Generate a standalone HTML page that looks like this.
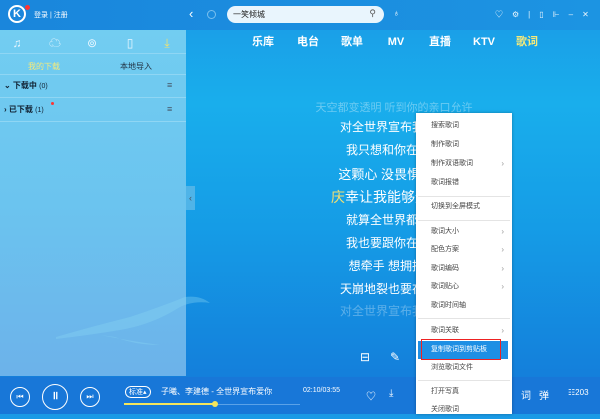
<!DOCTYPE html>
<html><head><meta charset="utf-8"><style>
*{margin:0;padding:0;box-sizing:border-box}
body{width:600px;height:414px;overflow:hidden;position:relative;font-family:"Liberation Sans","Noto Sans CJK SC",sans-serif;background:linear-gradient(180deg,#1a9ae6 0%,#19aeec 25%,#159ce6 55%,#1478d8 100%);color:#fff}
.abs{position:absolute}
.top{left:0;top:0;width:600px;height:30px;background:linear-gradient(90deg,#1a86dc,#1c94e2)}
.left{left:0;top:30px;width:186px;height:346px;background:linear-gradient(180deg,#72cdf1,#6bc4ef 50%,#6cb2ea);}
.nav span{position:absolute;top:34px;height:16px;line-height:16px;font-size:11px;font-weight:bold;transform:translateX(-50%)}
.ic{position:absolute;top:36px;font-size:12px;color:#e8f6ff;line-height:14px;transform:translateX(-50%)}
.lyr{position:absolute;font-size:12px;white-space:nowrap;transform:translateX(-50%)}
.menu{left:416px;top:113px;width:96px;height:301px;background:#fff;box-shadow:0 0 3px rgba(0,0,0,.3)}
.mi{position:absolute;left:0;width:96px;height:18px;font-size:7px;color:#444;padding-left:15px;line-height:18px}
.mi i{position:absolute;right:8px;font-style:normal;color:#999;font-size:8px}
.sep{position:absolute;left:2px;width:92px;height:1px;background:#e4e4e4}
.bar{left:0;top:377px;width:600px;height:37px;background:#1877d8}
.cb{position:absolute;border:1.5px solid #fff;border-radius:50%}
</style></head><body>
<div class="abs top"></div>
<div class="abs" style="left:8px;top:5px;width:18px;height:18px;border:2px solid #fff;border-radius:50%;font-size:11px;font-weight:bold;text-align:center;line-height:14px">K</div>
<div class="abs" style="left:25px;top:5px;width:5px;height:5px;background:#f33;border-radius:50%"></div>
<div class="abs" style="left:34px;top:10px;font-size:7px">登录 | 注册</div>
<div class="abs" style="left:189px;top:6px;font-size:13px">‹</div>
<div class="abs" style="left:207px;top:10px;width:9px;height:9px;border:1px solid #7bc0ee;border-radius:50%"></div>
<div class="abs" style="left:227px;top:6px;width:157px;height:17px;background:#e9f5fd;border-radius:9px;color:#222;font-size:8px;padding:3px 0 0 6px">一笑倾城<span style="position:absolute;right:8px;top:2px;color:#555;font-size:9px">⚲</span></div>
<div class="abs" style="left:393px;top:8px;font-size:9px">♁</div>
<div class="abs" style="left:495px;top:9px;font-size:8px;letter-spacing:9px;opacity:.9">♡⚙|▯⊩–✕</div>
<div class="abs left"></div>
<div class="abs" style="left:186px;top:186px;width:9px;height:24px;background:#4fb4e8;font-size:9px;color:#456;text-align:center;line-height:24px">‹</div>
<div class="ic" style="left:17px">♫</div>
<div class="ic" style="left:55px">☁</div>
<div class="ic" style="left:92px">⊚</div>
<div class="ic" style="left:130px">▯</div>
<div class="ic" style="left:167px;color:#f5e26a">⤓</div>
<div class="abs" style="left:0;top:53px;width:186px;height:1px;background:#8fd6f4"></div>
<div class="abs" style="left:28px;top:61px;font-size:8px;color:#f5ea7a">我的下载</div>
<div class="abs" style="left:120px;top:61px;font-size:8px;color:#234">本地导入</div>
<div class="abs" style="left:0;top:74px;width:186px;height:1px;background:#8fd6f4"></div>
<div class="abs" style="left:4px;top:80px;font-size:8px;color:#123"><b>⌄ 下载中</b> <span style="font-size:7px">(0)</span></div>
<div class="abs" style="left:167px;top:80px;font-size:9px;color:#456">≡</div>
<div class="abs" style="left:0;top:97px;width:186px;height:1px;background:#8fd6f4"></div>
<div class="abs" style="left:4px;top:104px;font-size:8px;color:#123"><b>› 已下载</b> <span style="font-size:7px">(1)</span></div>
<div class="abs" style="left:51px;top:102px;width:3px;height:3px;background:#f33;border-radius:50%"></div>
<div class="abs" style="left:167px;top:104px;font-size:9px;color:#456">≡</div>
<div class="abs" style="left:0;top:121px;width:186px;height:1px;background:#8fd6f4"></div>
<svg class="abs" style="left:50px;top:275px" width="170" height="80"><path d="M6 62 Q40 52 80 42 Q110 32 135 22 Q150 20 160 28 Q140 25 125 35 Q100 50 70 55 Q40 60 6 64Z" fill="#8ad6f4" opacity=".35"/><path d="M50 60 Q80 66 110 70 Q85 70 65 62Z" fill="#8ad6f4" opacity=".35"/></svg>
<div class="nav"><span style="left:263px">乐库</span><span style="left:308px">电台</span><span style="left:352px">歌单</span><span style="left:396px">MV</span><span style="left:440px">直播</span><span style="left:484px">KTV</span><span style="left:527px;color:#f5ea7a">歌词</span></div>
<div class="lyr" style="left:394px;top:99px;font-size:11px;opacity:.35">天空都变透明 听到你的亲口允许</div>
<div class="lyr" style="left:394px;top:118px">对全世界宣布我爱你</div>
<div class="lyr" style="left:394px;top:141px">我只想和你在一起</div>
<div class="lyr" style="left:394px;top:164px;font-size:13px">这颗心 没畏惧 勇敢</div>
<div class="lyr" style="left:394px;top:187px;font-size:14px"><span style="color:#f5e070">庆</span>幸让我能够遇见你</div>
<div class="lyr" style="left:394px;top:211px">就算全世界都反对</div>
<div class="lyr" style="left:394px;top:234px">我也要跟你在一起</div>
<div class="lyr" style="left:394px;top:257px">想牵手 想拥抱 想</div>
<div class="lyr" style="left:394px;top:280px">天崩地裂也要在一起</div>
<div class="lyr" style="left:394px;top:302px;opacity:.3">对全世界宣布我爱你</div>
<div class="abs" style="left:360px;top:350px;font-size:12px">⊟</div>
<div class="abs" style="left:390px;top:350px;font-size:12px">✎</div>
<div class="abs bar"></div>
<div class="cb" style="left:10px;top:387px;width:20px;height:20px;font-size:8px;text-align:center;line-height:17px">⏮</div>
<div class="cb" style="left:42px;top:384px;width:26px;height:26px;font-size:11px;text-align:center;line-height:23px;font-weight:bold">॥</div>
<div class="cb" style="left:80px;top:387px;width:20px;height:20px;font-size:8px;text-align:center;line-height:17px">⏭</div>
<div class="abs" style="left:125px;top:386px;border:1px solid #fff;border-radius:7px;font-size:7px;padding:0 3px">标准▴</div>
<div class="abs" style="left:161px;top:386px;font-size:8px">子曦、李建德 - 全世界宣布爱你</div>
<div class="abs" style="left:303px;top:387px;font-size:7px">02:10/03:55</div>
<div class="abs" style="left:124px;top:404px;width:176px;height:1px;background:#5aa2e8"></div>
<div class="abs" style="left:124px;top:403px;width:92px;height:2px;background:#f3e55c"></div>
<div class="abs" style="left:212px;top:401px;width:6px;height:6px;background:#f3e55c;border-radius:50%"></div>
<div class="abs" style="left:366px;top:388px;font-size:10px">♡</div>
<div class="abs" style="left:389px;top:388px;font-size:10px">⤓</div>
<div class="abs" style="left:521px;top:387px;font-size:10px;letter-spacing:8px">词弹</div>
<div class="abs" style="left:568px;top:388px;font-size:8px">☷203</div>
<div class="abs menu">
<div class="mi" style="top:4px">搜索歌词</div>
<div class="mi" style="top:23px">制作歌词</div>
<div class="mi" style="top:42px">制作双语歌词<i>›</i></div>
<div class="mi" style="top:61px">歌词报错</div>
<div class="sep" style="top:83px"></div>
<div class="mi" style="top:85px">切换到全屏模式</div>
<div class="sep" style="top:107px"></div>
<div class="mi" style="top:110px">歌词大小<i>›</i></div>
<div class="mi" style="top:128px">配色方案<i>›</i></div>
<div class="mi" style="top:147px">歌词编码<i>›</i></div>
<div class="mi" style="top:165px">歌词贴心<i>›</i></div>
<div class="mi" style="top:184px">歌词时间轴</div>
<div class="sep" style="top:205px"></div>
<div class="mi" style="top:209px">歌词关联<i>›</i></div>
<div class="mi" style="top:228px;left:2px;width:90px;background:#1e8fe4;color:#fff;padding-left:13px">复制歌词到剪贴板</div>
<div class="abs" style="left:5px;top:226px;width:80px;height:21px;border:1.5px solid #e22"></div>
<div class="mi" style="top:246px">浏览歌词文件</div>
<div class="sep" style="top:267px"></div>
<div class="mi" style="top:270px">打开写真</div>
<div class="mi" style="top:288px">关闭歌词</div>
</div>
</body></html>
